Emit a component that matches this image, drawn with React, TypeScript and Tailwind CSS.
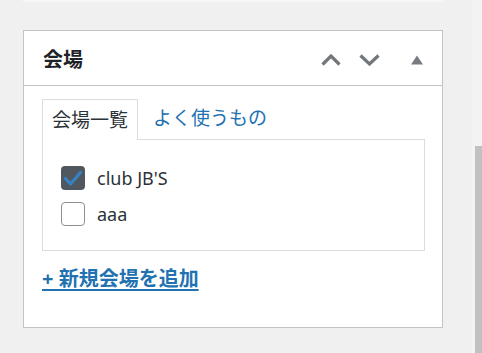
import React from 'react';

// 会場メタボックス
const venues = [
  { id: 1, name: "club JB'S", checked: true },
  { id: 2, name: 'aaa', checked: false },
];

const Checkbox: React.FC<{ checked: boolean }> = ({ checked }) =>
  checked ? (
    <span className="w-[24px] h-[24px] rounded-[4px] bg-[#50575e] flex items-center justify-center shrink-0">
      <svg width="24" height="24" viewBox="0 0 24 24">
        <path d="M4.5 12.5 L9.5 18 L19.5 6.5" fill="none" stroke="#3582c4" strokeWidth={3.2} strokeLinecap="round" strokeLinejoin="round" />
      </svg>
    </span>
  ) : (
    <span className="w-[24px] h-[24px] rounded-[4px] border border-[#8c8f94] bg-white shrink-0" />
  );

export default function App() {
  return (
    <div
      className="w-[482px] h-[353px] bg-[#f0f0f1] flex overflow-hidden text-[#2c3338]"
      style={{ fontFamily: '"Noto Sans", "Noto Sans CJK JP", sans-serif' }}
    >
      <div className="w-[472px] flex flex-col">
        {/* 上のボックスの下端 */}
        <div className="ml-[23px] w-[420px] h-[2px] bg-[#f6f7f7]" />

        <div className="mt-[28px] ml-[23px] w-[420px] h-[298px] border border-[#c3c4c7] bg-white flex flex-col">
          {/* ヘッダー */}
          <div className="h-[55px] border-b border-[#c3c4c7] flex items-center pl-[19px]">
            <h2 className="text-[20px] font-bold text-[#1d2327] leading-none mt-[3px]">会場</h2>
            <div className="ml-auto flex items-center mr-[19px] mt-[3px]">
              <svg width="20" height="12" viewBox="0 0 20 12">
                <path d="M1.5 10.5 L10 2 L18.5 10.5" fill="none" stroke="#72777c" strokeWidth={3.2} />
              </svg>
              <svg className="ml-[18px]" width="21" height="12" viewBox="0 0 21 12">
                <path d="M1.5 1.5 L10.5 10 L19.5 1.5" fill="none" stroke="#72777c" strokeWidth={3.2} />
              </svg>
              <svg className="ml-[31px]" width="12" height="10" viewBox="0 0 12 10">
                <path d="M6 0.5 L12 9.5 L0 9.5 Z" fill="#787c82" />
              </svg>
            </div>
          </div>

          {/* 本体 */}
          <div className="pt-[13px] pl-[18px] flex flex-col">
            <div className="flex items-end h-[40px]">
              <div className="relative z-10 -mb-px h-[41px] px-[9px] border border-b-0 border-[#dcdcde] bg-white flex items-center text-[19px] leading-none text-[#2c3338]">
                会場一覧
              </div>
              <div className="h-[41px] ml-[6px] px-[9px] flex items-center text-[19px] leading-none text-[#2271b1]">
                よく使うもの
              </div>
            </div>

            <div className="w-[383px] h-[112px] border border-[#dcdcde] pt-[26px] pl-[18px] flex flex-col gap-[12px]">
              {venues.map((v) => (
                <label key={v.id} className="flex items-center gap-[12px] h-[24px]">
                  <Checkbox checked={v.checked} />
                  <span className="text-[18px] leading-none text-[#2c3338]">{v.name}</span>
                </label>
              ))}
            </div>

            <div className="mt-[15px]">
              <a href="#" className="text-[20px] font-bold text-[#2271b1] underline underline-offset-[3px] leading-[26px]">
                + 新規会場を追加
              </a>
            </div>
          </div>
        </div>
      </div>

      {/* 右側のスクロールバー */}
      <div className="w-[10px] flex flex-col bg-[#f3f3f3]">
        <div className="h-[146px]" />
        <div className="flex-1 ml-[3px] bg-[#c1c1c1]" />
      </div>
    </div>
  );
}
